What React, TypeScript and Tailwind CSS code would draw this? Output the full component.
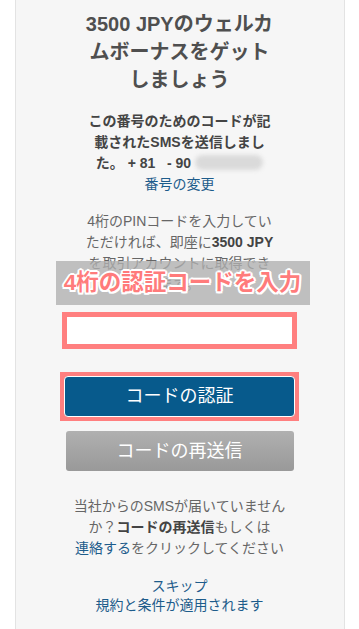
import React from "react";

export default function App() {
  const [code, setCode] = React.useState("");

  return (
    <div className="min-h-[629px] bg-white font-['Liberation_Sans','Noto_Sans_CJK_JP',sans-serif]">
      <div className="relative mx-auto flex min-h-[629px] w-[330px] flex-col items-center border-x border-[#e3e3e3] bg-[#f6f6f6] pt-[10px] pb-[14px] text-center">
        <h1 className="text-[20px] font-bold leading-[28px] text-[#4f4f4f]">
          3500 JPYのウェルカ
          <br />
          ムボーナスをゲット
          <br />
          しましょう
        </h1>

        <div className="mt-[17px] text-[14px] leading-[21px] text-[#444]">
          <p className="font-bold">
            この番号のためのコードが記
            <br />
            載されたSMSを送信しまし
            <br />
            た。 + 81 &nbsp; - 90
            <span className="ml-[4px] inline-block h-[15px] w-[68px] rounded-full bg-[#dadada] align-[-2px] blur-[2px]"></span>
          </p>
          <a href="#" className="text-[#1d5c8b]">
            番号の変更
          </a>
        </div>

        <p className="mt-[16px] text-[14px] leading-[21px] text-[#666]">
          4桁のPINコードを入力してい
          <br />
          ただければ、即座に<b className="text-[#444]">3500 JPY</b>
          <br />
          を取引アカウントに取得でき
          <br />
          ます。
        </p>

        <input
          value={code}
          onChange={(e) => setCode(e.target.value)}
          className="mt-[17px] h-[37px] w-[235px] border-[5px] border-[#ff7f7f] bg-white px-2 text-[16px] outline-none"
        />

        <div className="mt-[23px] w-[239px] bg-[#ff7f7f] p-[4px]">
          <button
            type="button"
            className="h-[41px] w-full rounded-[4px] border border-white bg-[#075a8c] text-[18px] text-white"
          >
            コードの認証
          </button>
        </div>

        <button
          type="button"
          className="mt-[10px] h-[40px] w-[228px] rounded-[3px] bg-gradient-to-b from-[#b0b0b0] to-[#999] text-[18px] text-white"
        >
          コードの再送信
        </button>

        <p className="mt-[25px] text-[14px] leading-[21px] text-[#666]">
          当社からのSMSが届いていません
          <br />
          か？<b className="text-[#444]">コードの再送信</b>もしくは
          <br />
          <a href="#" className="text-[#1d5c8b]">
            連絡する
          </a>
          をクリックしてください
        </p>

        <div className="mt-[18px] flex flex-col text-[14px] leading-[19px] text-[#1d5c8b]">
          <a href="#">スキップ</a>
          <a href="#">規約と条件が適用されます</a>
        </div>

        <div className="absolute top-[261px] left-[40px] flex h-[44px] w-[254px] items-center justify-center bg-[rgba(175,175,175,0.78)]">
          <span className="text-[22.5px] font-bold text-[#ff7b7b] [text-shadow:2px_0_#fff,-2px_0_#fff,0_2px_#fff,0_-2px_#fff,1.5px_1.5px_#fff,-1.5px_-1.5px_#fff,1.5px_-1.5px_#fff,-1.5px_1.5px_#fff]">
            4桁の認証コードを入力
          </span>
        </div>
      </div>
    </div>
  );
}
